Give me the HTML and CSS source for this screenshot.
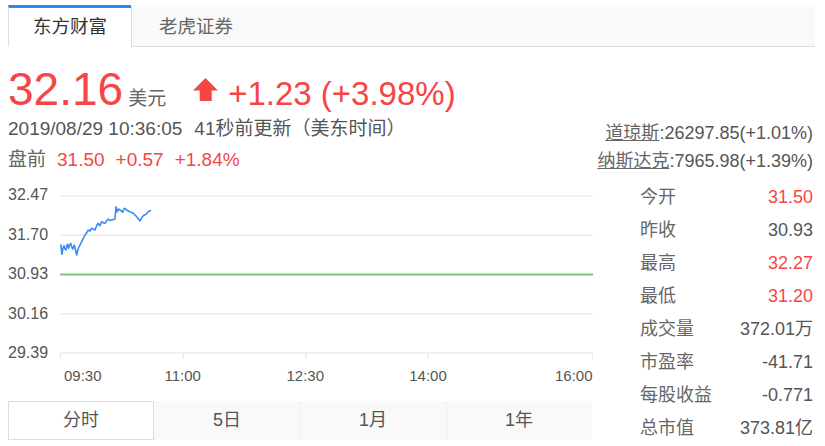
FILE: index.html
```html
<!DOCTYPE html>
<html lang="zh-CN">
<head>
<meta charset="utf-8">
<title>行情</title>
<link rel="stylesheet" href="styles.css">
</head>
<body>
<div class="page">
  <div class="tabs">
    <div class="tab active">东方财富</div>
    <div class="tab">老虎证券</div>
    <div class="tab-fill"></div>
  </div>

  <div class="quote">
    <div class="quote-left">
      <div class="price-row"><span class="price">32.16</span><span class="unit">美元</span><svg class="arrow" width="25" height="23" viewBox="0 0 25 23"><polygon points="12.5,0 25,12.5 18.7,12.5 18.7,23 6.7,23 6.7,12.5 0,12.5" fill="#f54646"/></svg><span class="change">+1.23 (+3.98%)</span></div>
      <div class="time-row">2019/08/29 10:36:05<span class="ago">41秒前更新（美东时间）</span></div>
      <div class="pre-row"><span class="pre-label">盘前</span><span class="up">31.50</span><span class="up">+0.57</span><span class="up">+1.84%</span></div>
    </div>
    <div class="indices">
      <div class="index"><a class="index-name">道琼斯</a>:26297.85(+1.01%)</div>
      <div class="index"><a class="index-name">纳斯达克</a>:7965.98(+1.39%)</div>
    </div>
  </div>

  <div class="main">
    <div class="chart-col">
      <svg class="chart" width="585" height="210" viewBox="0 0 585 210">
        <g class="grid">
          <line x1="52" y1="20" x2="585" y2="20"/>
          <line x1="52" y1="59.25" x2="585" y2="59.25"/>
          <line x1="52" y1="137.75" x2="585" y2="137.75"/>
          <line x1="52" y1="177" x2="585" y2="177"/>
          <line x1="52.5" y1="177" x2="52.5" y2="183"/>
          <line x1="175.2" y1="177" x2="175.2" y2="183"/>
          <line x1="297.7" y1="177" x2="297.7" y2="183"/>
          <line x1="420.2" y1="177" x2="420.2" y2="183"/>
          <line x1="584.5" y1="177" x2="584.5" y2="183"/>
        </g>
        <line class="base" x1="52" y1="98.5" x2="585" y2="98.5"/>
        <polyline class="price-line" points="52.7,68.3 53.5,75 54,78.3 55,72 56,69.7 57,73 58,74 59.3,68.3 60.7,72.3 61.5,69 62.7,67.3 63.5,70 64.7,73 65.5,71 66.3,69 67.5,74 68.7,79 70.3,72.3 72,69 73.7,65.7 75,63 77,59 78.5,57 80.3,54 82,55 83.7,52.3 85.5,53 87,54 88.5,50 90.3,47.3 92,49.7 93.7,45.7 95.5,47 97,47.3 98.5,45 100.3,43 102,44.5 103.7,44 105.5,43.5 107,43 108,30.7 109.3,35.7 110.5,33 112,34 113.5,35 114.7,36.3 116,33 117,32.3 118.5,34 120.3,35 122.5,36 125.3,37.3 127,39 128.7,40.7 130.5,43 132,45 133.5,42 135.3,39.7 136.5,39 138,38.3 139.2,37 140.3,35.7 141.8,35 143,34"/>
        <g class="ylabels">
          <text x="0" y="24">32.47</text>
          <text x="0" y="63.5">31.70</text>
          <text x="0" y="103">30.93</text>
          <text x="0" y="143">30.16</text>
          <text x="0" y="182">29.39</text>
        </g>
        <g class="xlabels">
          <text x="56" y="205">09:30</text>
          <text x="174.7" y="205" text-anchor="middle">11:00</text>
          <text x="297.3" y="205" text-anchor="middle">12:30</text>
          <text x="420" y="205" text-anchor="middle">14:00</text>
          <text x="584.5" y="205" text-anchor="end">16:00</text>
        </g>
      </svg>
      <div class="periods">
        <div class="period active">分时</div>
        <div class="period">5日</div>
        <div class="period">1月</div>
        <div class="period">1年</div>
      </div>
    </div>

    <div class="stats">
      <div class="stat"><span class="stat-label">今开</span><span class="stat-value up">31.50</span></div>
      <div class="stat"><span class="stat-label">昨收</span><span class="stat-value">30.93</span></div>
      <div class="stat"><span class="stat-label">最高</span><span class="stat-value up">32.27</span></div>
      <div class="stat"><span class="stat-label">最低</span><span class="stat-value up">31.20</span></div>
      <div class="stat"><span class="stat-label">成交量</span><span class="stat-value">372.01万</span></div>
      <div class="stat"><span class="stat-label">市盈率</span><span class="stat-value">-41.71</span></div>
      <div class="stat"><span class="stat-label">每股收益</span><span class="stat-value">-0.771</span></div>
      <div class="stat"><span class="stat-label">总市值</span><span class="stat-value">373.81亿</span></div>
    </div>
  </div>
</div>
</body>
</html>
```

FILE: styles.css
```css
* { box-sizing: border-box; }

body {
  margin: 0;
  background: #fff;
  color: #555;
  font-family: "Liberation Sans", "Noto Sans CJK SC", sans-serif;
}

.page {
  padding: 5px 10px 0 8px;
}

/* top source tabs */
.tabs {
  display: flex;
  height: 42px;
}
.tab {
  padding: 0 24px;
  font-size: 18.5px;
  line-height: 38px;
  color: #666;
  background: #f9f9f9;
  border-top: 3px solid transparent;
  border-left: 1px solid #ddd;
  border-bottom: 1px solid #ddd;
}
.tab + .tab {
  padding: 0 24px 0 27px;
}
.tab.active {
  color: #333;
  background: #fff;
  border-top-color: #2f86f4;
  border-bottom-color: #fff;
}
.tab-fill {
  flex: 1;
  background: #f9f9f9;
  border-bottom: 1px solid #ddd;
}

/* quote header */
.quote {
  display: flex;
  justify-content: space-between;
  align-items: flex-end;
  margin-top: 17px;
  padding-right: 2px;
}
.price-row {
  height: 50px;
  line-height: 50px;
  white-space: nowrap;
}
.price {
  font-size: 46px;
  color: #f54646;
}
.unit {
  font-size: 19px;
  color: #666;
  margin-left: 5px;
}
.arrow {
  margin-left: 27px;
  vertical-align: 4px;
}
.change {
  font-size: 33px;
  color: #f54646;
  margin-left: 10px;
}
.time-row {
  margin-top: 2px;
  font-size: 19px;
  line-height: 26px;
  color: #555;
  white-space: nowrap;
}
.ago {
  margin-left: 12px;
}
.pre-row {
  margin-top: 6px;
  font-size: 19px;
  line-height: 24px;
  white-space: nowrap;
}
.pre-label {
  color: #666;
}
.up {
  color: #f54646;
}
.pre-row .up {
  margin-left: 11px;
}
.indices {
  margin-bottom: -3px;
  text-align: right;
}
.index {
  font-size: 18px;
  line-height: 28px;
  color: #555;
  white-space: nowrap;
}
.index-name {
  color: #666;
  text-decoration: underline;
}

/* chart + stats */
.main {
  display: flex;
  margin-top: 4px;
}
.chart-col {
  width: 592px;
}
.chart {
  display: block;
}
.grid line {
  stroke: #ebebeb;
  stroke-width: 1.6;
}
.base {
  stroke: #7cc576;
  stroke-width: 2;
}
.price-line {
  fill: none;
  stroke: #3b8bf6;
  stroke-width: 1.6;
  stroke-linejoin: round;
}
.ylabels text {
  font-family: "Liberation Sans", sans-serif;
  font-size: 16px;
  fill: #555;
}
.xlabels text {
  font-family: "Liberation Sans", sans-serif;
  font-size: 15px;
  fill: #555;
}

.periods {
  display: flex;
  width: 584px;
  height: 39px;
  margin-top: 15px;
  background: #f9f9f9;
}
.period {
  flex: 1;
  text-align: center;
  font-size: 18px;
  line-height: 37px;
  color: #555;
  border: 1px solid transparent;
  border-left-color: #eee;
}
.period:first-child + .period {
  border-left-color: transparent;
}
.period.active {
  background: #fff;
  border: 1px solid #ddd;
}

.stats {
  width: 215px;
  margin-top: 5px;
  padding: 0 2px 0 40px;
}
.stat {
  display: flex;
  justify-content: space-between;
  height: 33px;
  font-size: 18px;
  line-height: 33px;
}
.stat-label {
  color: #666;
}
.stat-value {
  color: #555;
}
.stat-value.up {
  color: #f54646;
}
```
